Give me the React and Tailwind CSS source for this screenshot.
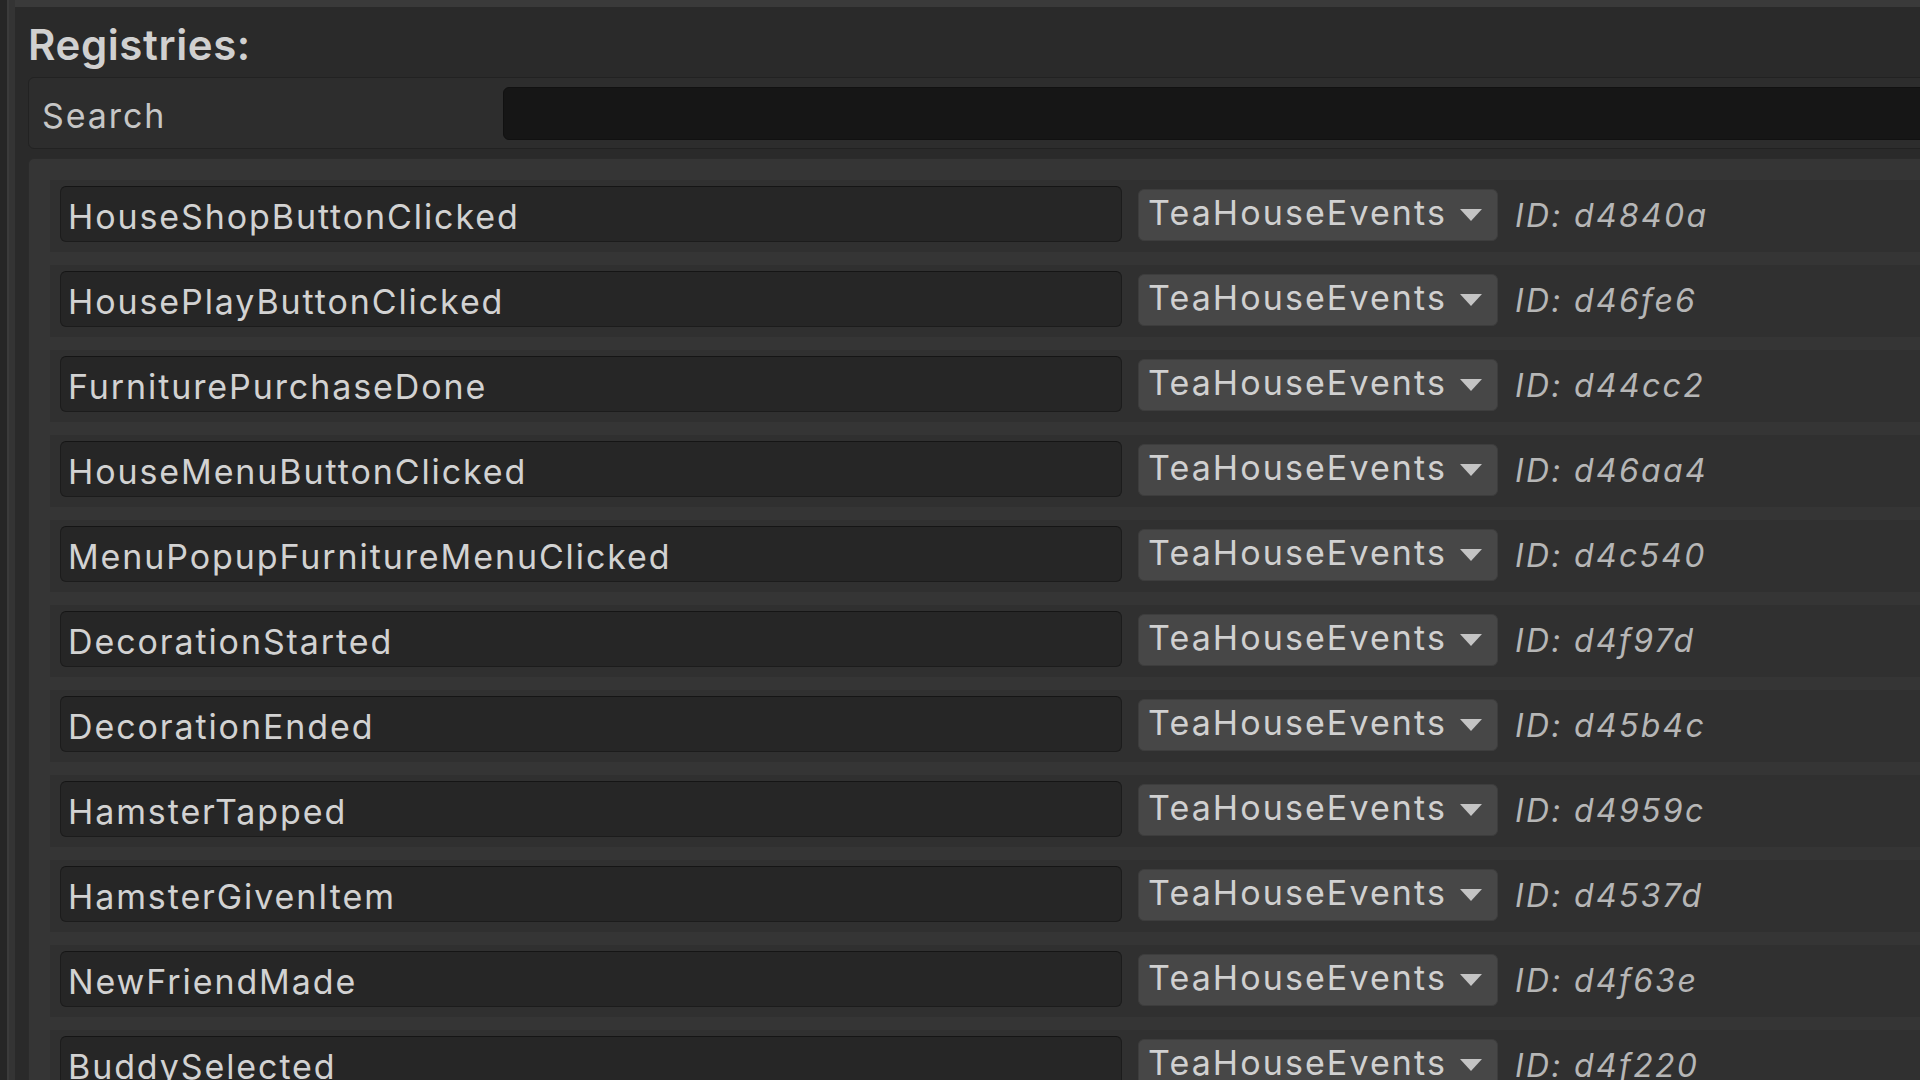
import React from "react";

const rows = [
  ["HouseShopButtonClicked", "d4840a"],
  ["HousePlayButtonClicked", "d46fe6"],
  ["FurniturePurchaseDone", "d44cc2"],
  ["HouseMenuButtonClicked", "d46aa4"],
  ["MenuPopupFurnitureMenuClicked", "d4c540"],
  ["DecorationStarted", "d4f97d"],
  ["DecorationEnded", "d45b4c"],
  ["HamsterTapped", "d4959c"],
  ["HamsterGivenItem", "d4537d"],
  ["NewFriendMade", "d4f63e"],
  ["BuddySelected", "d4f220"],
];

function Row({ name, id }) {
  return (
    <div className="h-[72px] bg-[#303030] flex items-start pl-[10px] pt-[6px] shrink-0">
      <div className="w-[1062px] h-[56px] bg-[#262626] border border-[#1c1c1c] border-t-[#151515] rounded-[6px] flex items-center pl-[7px] pt-[5px] shrink-0">
        <span className="text-[34px] leading-[40px] tracking-[1.9px] text-[#d2d2d2] whitespace-nowrap">{name}</span>
      </div>
      <div className="ml-[16px] mt-[3px] w-[360px] h-[52px] bg-[#474747] border border-[#3d3d3d] rounded-[6px] flex items-center pl-[9px] pr-[15px] shrink-0">
        <span className="text-[34px] leading-[40px] tracking-[2.1px] text-[#d0d0d0] pb-[4px] whitespace-nowrap">TeaHouseEvents</span>
        <svg className="ml-auto shrink-0" width="22" height="12" viewBox="0 0 22 12">
          <path d="M0 0 H22 L11 12 Z" fill="#c4c4c4" />
        </svg>
      </div>
      <div className="ml-[17px] h-[56px] flex items-center shrink-0">
        <span className="text-[32px] leading-[40px] tracking-[2.3px] italic text-[#b6b6b6] pt-[3px] whitespace-nowrap">ID: {id}</span>
      </div>
    </div>
  );
}

export default function App() {
  return (
    <div className="w-[1920px] h-[1080px] overflow-hidden bg-[#2a2a2a] flex font-['Inter','Noto_Sans',sans-serif]">
      <div className="w-[7px] h-full bg-[#262626] shrink-0" />
      <div className="w-[8px] h-full bg-[#343434] border-l-2 border-[#3b3b3b] shrink-0" />
      <div className="flex-1 flex flex-col min-w-0">
        <div className="h-[7px] bg-[#3a3a3a] shrink-0" />
        <div className="pl-[13px] flex flex-col">
          <div className="h-[70px] pt-[13px] shrink-0">
            <div className="text-[42px] leading-[50px] tracking-[0.6px] font-semibold text-[#d0d0d0]">Registries:</div>
          </div>
          <div className="w-[1960px] h-[72px] bg-[#2d2d2d] border border-[#222222] rounded-[6px] flex items-center shrink-0">
            <div className="w-[474px] pl-[13px] pt-[5px] shrink-0">
              <span className="text-[34px] leading-[40px] tracking-[1.9px] text-[#c6c6c6]">Search</span>
            </div>
            <div className="flex-1 h-[53px] bg-[#161616] border border-[#111111] rounded-[6px]" />
          </div>
          <div className="mt-[9px] w-[1960px] bg-[#353535] border border-[#2b2b2b] rounded-tl-[6px] pl-[21px] pt-[21px] flex flex-col gap-[13px]">
            {rows.map(([n, i]) => (
              <Row key={i} name={n} id={i} />
            ))}
          </div>
        </div>
      </div>
    </div>
  );
}
